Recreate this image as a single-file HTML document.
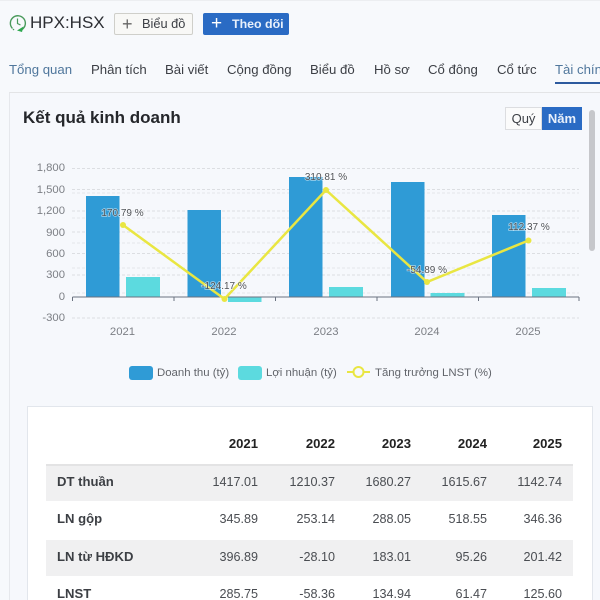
<!DOCTYPE html>
<html><head><meta charset="utf-8">
<style>
html,body{margin:0;padding:0;width:600px;height:600px;overflow:hidden;background:#f7f9fc;font-family:"Liberation Sans","Noto Sans CJK SC",sans-serif;color:#333}
#p{position:absolute;left:0;top:0;width:600px;height:600px;overflow:hidden;filter:blur(.35px)}
.a{position:absolute;white-space:nowrap}
.nav{top:61px;font-size:13.2px;line-height:18px;color:#3c3f45}
.btn{top:13px;height:22px;border-radius:2px;font-size:12.8px;line-height:22px;box-sizing:border-box}
.row{position:absolute;left:46px;width:527px}
.c{position:absolute;font-size:12.6px;line-height:18px;color:#4a4d52;text-align:right;width:70px}
.l{position:absolute;left:57px;font-size:13.1px;line-height:18px;font-weight:bold;color:#3c3f44;white-space:nowrap}
.h{position:absolute;font-size:13.1px;line-height:18px;font-weight:bold;color:#222;text-align:right;width:70px;top:435px}
</style></head><body><div id="p">
<div class="a" style="left:0;top:0;width:600px;height:1px;background:#eceef1"></div>
<svg class="a" style="left:9px;top:14px" width="20" height="20" viewBox="0 0 20 20"><path d="M3.500 14.500A7.500 7.500 0 1 1 13 15.500" fill="none" stroke="#4a9a5c" stroke-width="1.400"/><path d="M8.500 4.500V9.500L11.500 11" fill="none" stroke="#4a9a5c" stroke-width="1.200"/><path d="M14.500 12.500L13 18L8 16.500Z" fill="#2ea84f"/><circle cx="4.500" cy="15.500" r=".8" fill="#4a9a5c"/></svg>
<div class="a" style="left:30px;top:13px;font-size:17px;line-height:20px;color:#2c2e33">HPX:HSX</div>
<div class="a btn" style="left:114px;width:79px;background:#f8f8f6;border:1px solid #cfcfca;color:#3c3f45"><span style="position:absolute;left:7px;top:-1px;font-size:18px;color:#666">+</span><span style="position:absolute;left:27px;top:-1px">Biểu đồ</span></div>
<div class="a btn" style="left:203px;width:86px;background:#2a6bc4;color:#e8f0fb;font-weight:bold;font-size:12.4px"><span style="position:absolute;left:8px;top:0;font-size:19px;font-weight:normal;color:#fff">+</span><span style="position:absolute;left:29px;top:0">Theo dõi</span></div>
<div class="a nav" style="left:9px;color:#50779c">Tổng quan</div>
<div class="a nav" style="left:91px">Phân tích</div>
<div class="a nav" style="left:165px">Bài viết</div>
<div class="a nav" style="left:227px">Cộng đồng</div>
<div class="a nav" style="left:310px">Biểu đồ</div>
<div class="a nav" style="left:374px">Hồ sơ</div>
<div class="a nav" style="left:428px">Cổ đông</div>
<div class="a nav" style="left:497px">Cổ tức</div>
<div class="a nav" style="left:555px;color:#50779c">Tài chính</div>
<div class="a" style="left:555px;top:82px;width:45px;height:2px;background:#2d5a9e"></div>
<div class="a" style="left:9px;top:92px;width:591px;height:508px;background:#f6f8fc;border-top:1px solid #e3e4e6;border-left:1px solid #e6e8ec;box-sizing:border-box"></div>
<div class="a" style="left:23px;top:108px;font-size:17px;line-height:20px;font-weight:bold;color:#25272b">Kết quả kinh doanh</div>
<div class="a" style="left:505px;top:107px;width:37px;height:23px;background:#fbfbfb;border:1px solid #dcdde0;box-sizing:border-box;font-size:13px;line-height:21px;text-align:center;color:#3c3f45">Quý</div>
<div class="a" style="left:542px;top:107px;width:40px;height:23px;background:#2a6bc4;font-size:13px;line-height:23px;font-weight:bold;text-align:center;color:#e8f0fb">Năm</div>
<div class="a" style="left:589px;top:110px;width:6px;height:141px;background:#c6c7cb;border-radius:3px"></div>

<svg class="a" style="left:0;top:150px" width="600" height="240" viewBox="0 150 600 240" font-family="Liberation Sans, sans-serif">
<g stroke="#e4e6ea" stroke-width="1" stroke-dasharray="3 2">
<path d="M72 193H579M72 218H579M72 243H579M72 268H579M72 293H579"/>
</g>
<g stroke="#dcdee2" stroke-width="1" stroke-dasharray="3 2">
<path d="M72 168.500H579M72 189.500H579M72 211H579M72 232H579M72 253.500H579M72 275H579M72 318H579"/>
</g>
<g fill="#2f9bd6">
<rect x="86" y="196" width="33.500" height="101"/>
<rect x="187.500" y="210" width="33.500" height="87"/>
<rect x="289" y="177" width="33.500" height="120"/>
<rect x="391" y="182" width="33.500" height="115"/>
<rect x="492" y="215" width="33.500" height="82"/>
</g>
<g fill="#5cdadf">
<rect x="126" y="277" width="34" height="20"/>
<rect x="228" y="297" width="33.500" height="5"/>
<rect x="329" y="287" width="34" height="10"/>
<rect x="430.500" y="293" width="34" height="4"/>
<rect x="532" y="288" width="34" height="9"/>
</g>
<path d="M72.500 297H579M72.500 297v4M174 297v4M275.500 297v4M377 297v4M478.500 297v4M579 297v4" stroke="#6a7280" fill="none"/>
<path d="M123 225L224.500 299L326 190L427 282L528.500 240.500" fill="none" stroke="#e9e642" stroke-width="2.500"/>
<g fill="#e9e642">
<circle cx="123" cy="225" r="3"/><circle cx="224.500" cy="299" r="3"/><circle cx="326" cy="190" r="3"/><circle cx="427" cy="282" r="3"/><circle cx="528.500" cy="240.500" r="3"/>
</g>
<g font-size="11.300" fill="#7c7f85" text-anchor="end">
<text x="65" y="171">1,800</text><text x="65" y="193">1,500</text><text x="65" y="214">1,200</text><text x="65" y="236">900</text><text x="65" y="257">600</text><text x="65" y="278">300</text><text x="65" y="300">0</text><text x="65" y="321">-300</text>
</g>
<g font-size="11.300" fill="#7c7f85" text-anchor="middle">
<text x="122.500" y="335">2021</text><text x="224" y="335">2022</text><text x="326" y="335">2023</text><text x="427" y="335">2024</text><text x="528" y="335">2025</text>
</g>
<g font-size="10" fill="#4f5257" text-anchor="middle" stroke="#ffffff" stroke-width="1.500" paint-order="stroke" stroke-opacity=".55">
<text x="122.500" y="216">170.79 %</text><text x="224" y="289">-124.17 %</text><text x="326" y="180">310.81 %</text><text x="427" y="273">-54.89 %</text><text x="529" y="230">112.37 %</text>
</g>
<rect x="129" y="366" width="24" height="14" rx="3" fill="#2f9bd6"/>
<rect x="238" y="366" width="24" height="14" rx="3" fill="#5cdadf"/>
<path d="M347 372H370" stroke="#e9e642" stroke-width="2"/><circle cx="358.500" cy="372" r="5" fill="#f6f8fc" stroke="#e9e642" stroke-width="2"/>
<g font-size="11.400" fill="#62656b">
<text x="157" y="376">Doanh thu (tỷ)</text><text x="266" y="376">Lợi nhuận (tỷ)</text><text x="375" y="376">Tăng trưởng LNST (%)</text>
</g>
</svg>

<div class="a" style="left:27px;top:406px;width:566px;height:220px;background:#fff;border:1px solid #e2e6ec;box-sizing:border-box"></div>
<div class="h" style="left:188px">2021</div><div class="h" style="left:265px">2022</div><div class="h" style="left:341px">2023</div><div class="h" style="left:417px">2024</div><div class="h" style="left:492px">2025</div>
<div class="row" style="top:464px;height:37px;background:#f0f0f1;border-top:2px solid #e3e3e4;box-sizing:border-box"></div>
<div class="row" style="top:540px;height:36px;background:#f0f0f1"></div>

<div class="l" style="top:473px">DT thuần</div>
<div class="c" style="left:188px;top:473px">1417.01</div><div class="c" style="left:265px;top:473px">1210.37</div><div class="c" style="left:341px;top:473px">1680.27</div><div class="c" style="left:417px;top:473px">1615.67</div><div class="c" style="left:492px;top:473px">1142.74</div>
<div class="l" style="top:510px">LN gộp</div>
<div class="c" style="left:188px;top:510px">345.89</div><div class="c" style="left:265px;top:510px">253.14</div><div class="c" style="left:341px;top:510px">288.05</div><div class="c" style="left:417px;top:510px">518.55</div><div class="c" style="left:492px;top:510px">346.36</div>
<div class="l" style="top:548px">LN từ HĐKD</div>
<div class="c" style="left:188px;top:548px">396.89</div><div class="c" style="left:265px;top:548px">-28.10</div><div class="c" style="left:341px;top:548px">183.01</div><div class="c" style="left:417px;top:548px">95.26</div><div class="c" style="left:492px;top:548px">201.42</div>
<div class="l" style="top:585px">LNST</div>
<div class="c" style="left:188px;top:585px">285.75</div><div class="c" style="left:265px;top:585px">-58.36</div><div class="c" style="left:341px;top:585px">134.94</div><div class="c" style="left:417px;top:585px">61.47</div><div class="c" style="left:492px;top:585px">125.60</div>
</div></body></html>
